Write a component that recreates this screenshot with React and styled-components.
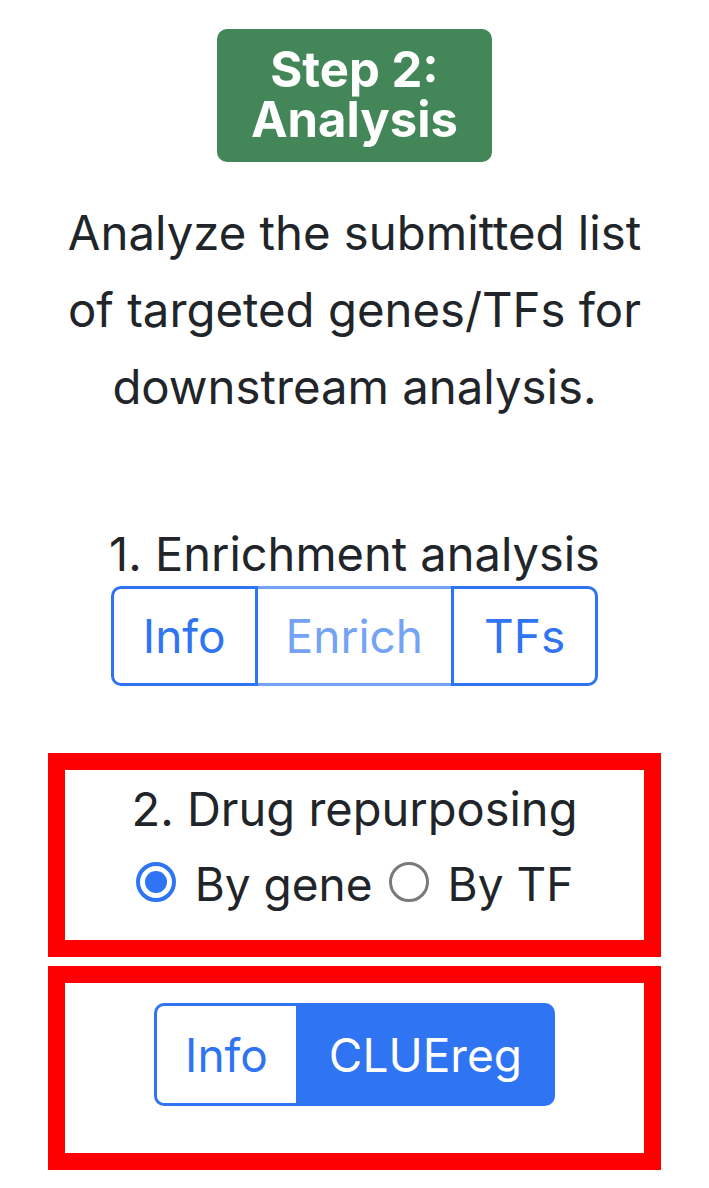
import React, { useState } from 'react'
import styled, { createGlobalStyle } from 'styled-components'

const GlobalStyle = createGlobalStyle`
  body {
    margin: 0;
    background: #ffffff;
    font-family: Inter, "Noto Sans", "Liberation Sans", sans-serif;
    color: #212529;
  }
`

const blue = '#2f74f2'
const paleBlue = '#74a3f6'

const Sidebar = styled.div`
  width: 613px;
  margin: 0 auto;
  padding-top: 29px;
  display: flex;
  flex-direction: column;
  align-items: center;
  text-align: center;
`

const StepBadge = styled.div`
  width: 275px;
  box-sizing: border-box;
  padding: 16px 0 17px;
  background: #438658;
  color: #ffffff;
  border-radius: 10px;
  font-weight: 700;
  font-size: 49px;
  line-height: 50px;
`

const Intro = styled.p`
  margin: 32px 0 0;
  max-width: 610px;
  font-size: 47.3px;
  line-height: 77px;
`

const SectionLabel = styled.div`
  margin-top: ${(props) => props.$top || 0}px;
  font-size: 47px;
  line-height: 58px;
`

const BtnGroup = styled.div`
  display: inline-flex;
  margin-top: ${(props) => props.$top || 0}px;
`

const GroupBtn = styled.button`
  font-family: inherit;
  font-size: 46px;
  height: ${(props) => props.$h || 100}px;
  box-sizing: border-box;
  padding: 0 ${(props) => props.$px || 30}px;
  margin: 0;
  background: ${(props) => (props.$active ? blue : '#ffffff')};
  color: ${(props) => (props.$active ? '#ffffff' : props.$disabled ? paleBlue : blue)};
  border: 3px solid ${blue};
  border-left-width: ${(props) => (props.$noLeft ? 0 : 3)}px;
  border-right-width: ${(props) => (props.$noRight ? 0 : 3)}px;
  border-top-color: ${(props) => (props.$disabled ? paleBlue : blue)};
  border-bottom-color: ${(props) => (props.$disabled ? paleBlue : blue)};
  cursor: ${(props) => (props.$disabled ? 'default' : 'pointer')};

  &:first-child {
    border-radius: 10px 0 0 10px;
  }
  &:last-child {
    border-radius: 0 10px 10px 0;
  }
`

const Highlight = styled.div`
  width: 100%;
  height: 204px;
  box-sizing: border-box;
  border: 17px solid #ff0000;
  display: flex;
  flex-direction: column;
  align-items: center;
  padding-top: ${(props) => props.$padTop || 0}px;
  margin-top: ${(props) => props.$top || 0}px;
`

const RadioRow = styled.div`
  display: flex;
  align-items: center;
  margin-top: 17px;
  font-size: 46px;
  line-height: 58px;
`

const RadioLabel = styled.label`
  display: flex;
  align-items: center;
  cursor: pointer;
  margin-right: 16px;

  &:last-child {
    margin-right: 0;
  }
`

const RadioDot = styled.span`
  flex: none;
  width: 40px;
  height: 40px;
  box-sizing: border-box;
  border-radius: 50%;
  border: ${(props) => (props.$checked ? `4px solid ${blue}` : '3px solid #7a7a7a')};
  margin-right: 19px;
  display: flex;
  align-items: center;
  justify-content: center;
  transform: translateY(-2px);

  &::after {
    content: '';
    display: ${(props) => (props.$checked ? 'block' : 'none')};
    width: 22px;
    height: 22px;
    border-radius: 50%;
    background: ${blue};
  }
`

const HiddenRadio = styled.input`
  display: none;
`

function App() {
  const [mode, setMode] = useState('gene')

  return (
    <>
      <GlobalStyle />
      <Sidebar>
        <StepBadge>
          Step 2:
          <br />
          Analysis
        </StepBadge>
        <Intro>Analyze the submitted list of targeted genes/TFs for downstream analysis.</Intro>

        <SectionLabel $top={100}>1. Enrichment analysis</SectionLabel>
        <BtnGroup $top={3}>
          <GroupBtn $px={29}>Info</GroupBtn>
          <GroupBtn $px={28} $disabled $noLeft $noRight>
            Enrich
          </GroupBtn>
          <GroupBtn $px={30}>TFs</GroupBtn>
        </BtnGroup>

        <Highlight $top={67} $padTop={10}>
          <SectionLabel>2. Drug repurposing</SectionLabel>
          <RadioRow>
            <RadioLabel onClick={() => setMode('gene')}>
              <HiddenRadio type="radio" name="drug" readOnly checked={mode === 'gene'} />
              <RadioDot $checked={mode === 'gene'} />
              By gene
            </RadioLabel>
            <RadioLabel onClick={() => setMode('tf')}>
              <HiddenRadio type="radio" name="drug" readOnly checked={mode === 'tf'} />
              <RadioDot $checked={mode === 'tf'} />
              By TF
            </RadioLabel>
          </RadioRow>
        </Highlight>

        <Highlight $top={9} $padTop={20}>
          <BtnGroup>
            <GroupBtn $h={103} $px={28} $noRight>Info</GroupBtn>
            <GroupBtn $h={103} $px={30} $active>CLUEreg</GroupBtn>
          </BtnGroup>
        </Highlight>
      </Sidebar>
    </>
  )
}

export default App
